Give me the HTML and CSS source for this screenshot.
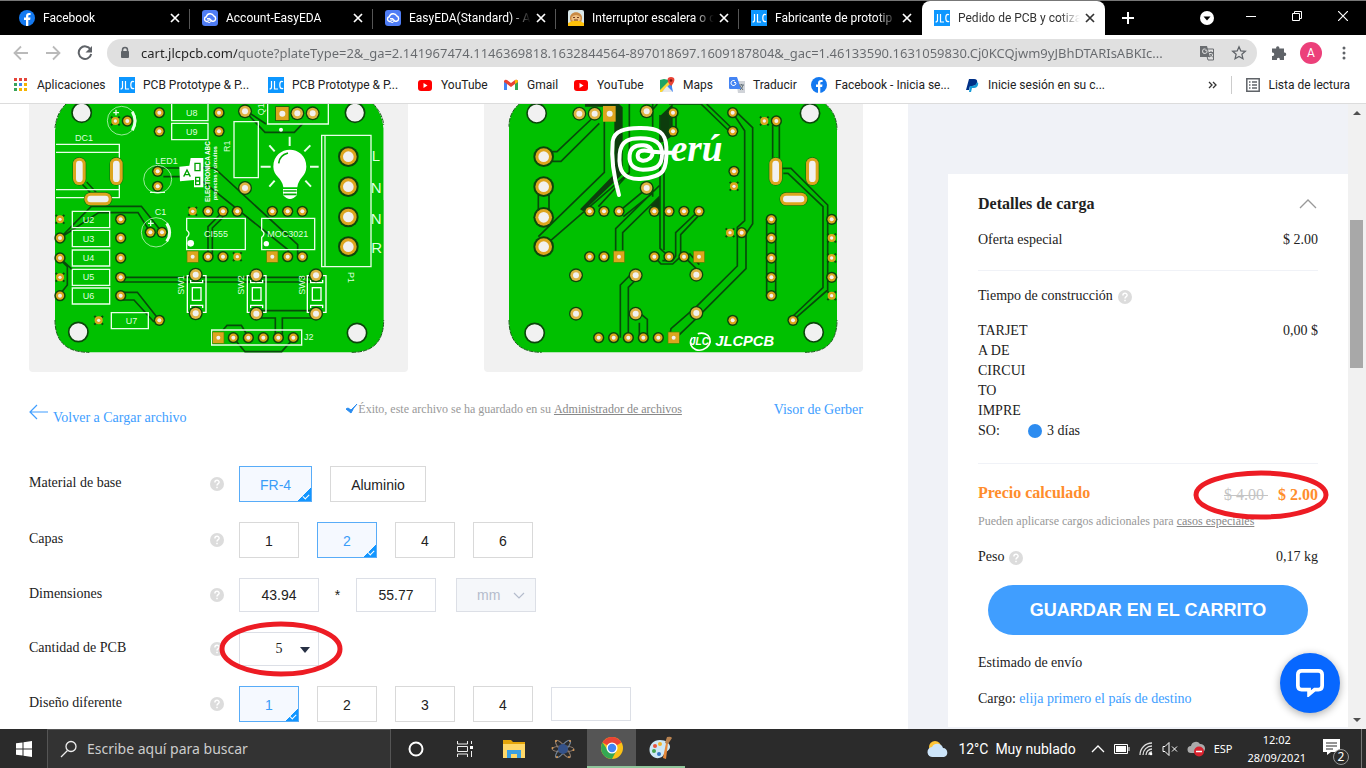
FILE: index.html
```html
<!DOCTYPE html>
<html lang="es">
<head>
<meta charset="utf-8">
<title>Pedido de PCB y cotización</title>
<link rel="stylesheet" href="styles.css">
</head>
<body>
<svg class="defs" aria-hidden="true">
  <symbol id="fb" viewBox="0 0 16 16"><circle cx="8" cy="8" r="8" fill="#1479f0"/><path d="M7 16V10H5V7.600h2V6c0-2 1.200-3.100 3-3.100.9 0 1.600.1 1.600.1v2h-1c-1 0-1.300.6-1.300 1.200v1.400h2.200L11.100 10H9.300v6z" fill="#fff"/></symbol>
  <symbol id="eda" viewBox="0 0 16 16"><rect width="16" height="16" rx="3" fill="#4f7df5"/><path d="M6 11.500H4.500a2.400 2.400 0 0 1-.2-4.700A4 4 0 0 1 11.800 6 2.700 2.700 0 0 1 11.500 11.200H10L7.500 8.700H5" fill="none" stroke="#fff" stroke-width="1.400"/><circle cx="7.200" cy="11.300" r="1.300" fill="#4f7df5" stroke="#fff"/></symbol>
  <symbol id="jlc" viewBox="0 0 16 16"><rect width="16" height="16" fill="#0d97ff"/><path d="M3.500 4v6q0 2-2 2M6.500 4v8h3.500M15 4.800Q14.500 4.400 13.800 4.400C12 4.400 11.800 6 11.800 8s.3 3.600 2 3.600q.8 0 1.300-.4" fill="none" stroke="#fff" stroke-width="1.200"/></symbol>
  <symbol id="face" viewBox="0 0 16 16"><rect width="16" height="16" rx="2" fill="#d9e6e8"/><path d="M2 9c-1-9 13-9 12 0l-1 4H3z" fill="#c98a45"/><path d="M3.500 7q4.500-4 9 0v3q-4 3-9 0z" fill="#efbf83"/><path d="M0 16v-3q8-5 16 0v3z" fill="#ffc10a"/><path d="M5 7.500h2M9 7.500h2M6 10h4" stroke="#713b1c"/></symbol>
  <symbol id="x" viewBox="0 0 10 10"><path d="M1 1l8 8M9 1L1 9" fill="none" stroke="currentColor" stroke-width="1.700"/></symbol>
  <symbol id="yt" viewBox="0 0 16 16"><rect x="1" y="3" width="14" height="11" rx="3" fill="#f00"/><path d="M6.500 6v5l4-2.500z" fill="#fff"/></symbol>
  <symbol id="help" viewBox="0 0 14 14"><circle cx="7" cy="7" r="7" fill="#dcdcdc"/><path d="M4.900 5.500C4.900 2.600 9.100 2.700 9.100 5.200 9.100 6.700 7 6.700 7 8.500M7 9.700v1.500" fill="none" stroke="#fff" stroke-width="1.500"/></symbol>
  <g id="pad"><circle r="17" fill="#0b470b"/><circle r="12.500" fill="#dca51e"/><circle r="6" fill="#f1f1ef"/></g>
  <g id="via"><path d="M-13-13l26 26M13-13l-26 26" stroke="#0b470b" stroke-width="6" stroke-dasharray="6 25"/><circle r="12" fill="#dca51e"/><circle r="5" fill="#f1f1ef"/></g>
  <g id="sq"><rect x="-17" y="-17" width="34" height="34" fill="#dca51e" stroke="#4f8500" stroke-width="2"/><circle r="6" fill="#f1f1ef"/></g>
  <g id="mid"><circle r="21" fill="#0b470b"/><circle r="17" fill="#dfb344"/><circle r="9" fill="#f1f1ef"/></g>
  <g id="big"><circle r="31" fill="#0b470b"/><circle r="25" fill="#dca51e"/><circle r="16" fill="#f1f1ef"/></g>
  <g id="hole"><circle r="29" fill="#f1f1f1" stroke="#0b470b" stroke-width="5"/></g>
  <g id="slot"><rect x="-21" y="-43" width="42" height="86" rx="21" fill="#0b7a0b"/><rect x="-19" y="-41" width="38" height="82" rx="19" fill="#dca51e"/><rect x="-10" y="-32" width="20" height="64" rx="10" fill="#f1f1f1"/></g>
  <g id="sw"><path d="M-18-55h-10V55h10M18-55h10V55h-10M-18-42v8h36v-8M-18 42v-8h36v8" fill="none" stroke="#fff" stroke-width="4"/><rect x="-13" y="-19" width="26" height="38" fill="none" stroke="#fff" stroke-width="4"/></g>
</svg>

<header class="browser">
  <div class="tabs">
    <div class="tab"><svg class="i16"><use href="#fb"/></svg><span>Facebook</span><button aria-label="Cerrar"><svg><use href="#x"/></svg></button></div>
    <div class="tab"><svg class="i16"><use href="#eda"/></svg><span>Account-EasyEDA</span><button aria-label="Cerrar"><svg><use href="#x"/></svg></button></div>
    <div class="tab"><svg class="i16"><use href="#eda"/></svg><span>EasyEDA(Standard) - A</span><button aria-label="Cerrar"><svg><use href="#x"/></svg></button></div>
    <div class="tab"><svg class="i16"><use href="#face"/></svg><span>Interruptor escalera o c</span><button aria-label="Cerrar"><svg><use href="#x"/></svg></button></div>
    <div class="tab last"><svg class="i16"><use href="#jlc"/></svg><span>Fabricante de prototip</span><button aria-label="Cerrar"><svg><use href="#x"/></svg></button></div>
    <div class="tab active"><svg class="i16"><use href="#jlc"/></svg><span>Pedido de PCB y cotiza</span><button aria-label="Cerrar"><svg><use href="#x"/></svg></button></div>
    <button class="newtab" aria-label="Nueva pestaña"><svg width="14" height="14"><path d="M7 1v12M1 7h12" stroke="#fff" stroke-width="2"/></svg></button>
    <div class="winbtns">
      <button aria-label="Buscar pestañas"><svg width="14" height="14"><circle cx="7" cy="7" r="7" fill="#fff"/><path d="M3.500 5.500h7L7 9.500z" fill="#000"/></svg></button>
      <button aria-label="Minimizar"><svg width="10" height="10"><path d="M0 5.500h10" stroke="#fff"/></svg></button>
      <button aria-label="Restaurar"><svg width="10" height="10"><path d="M2.500 2.500v-2h7v7h-2M.5 2.500h7v7h-7z" fill="none" stroke="#fff"/></svg></button>
      <button aria-label="Cerrar ventana"><svg width="10" height="10"><path d="M0 0l10 10M10 0L0 10" stroke="#fff" stroke-width="1.200"/></svg></button>
    </div>
  </div>
  <div class="toolbar">
    <button aria-label="Atrás"><svg width="16" height="16"><path d="M15 8H2M8 1.500L1.500 8 8 14.500" fill="none" stroke="#bababa" stroke-width="1.800"/></svg></button>
    <button aria-label="Adelante"><svg width="16" height="16"><path d="M1 8h13M8 1.500L14.500 8 8 14.500" fill="none" stroke="#bababa" stroke-width="1.800"/></svg></button>
    <button aria-label="Recargar"><svg width="16" height="16"><path d="M13.500 4.500A6.300 6.300 0 1 0 14.200 9" fill="none" stroke="#5f6368" stroke-width="2"/><path d="M15 1v6.500H8.500z" fill="#5f6368"/></svg></button>
    <div class="omni">
      <svg width="10" height="14"><path d="M2.500 6V4a2.500 2.500 0 0 1 5 0v2" fill="none" stroke="#5f6368" stroke-width="1.500"/><rect x="1" y="5" width="8" height="7" rx="1" fill="#5f6368"/></svg>
      <input type="text" aria-label="Dirección" value="cart.jlcpcb.com/quote?plateType=2&amp;_ga=2.141967474.1146369818.1632844564-897018697.1609187804&amp;_gac=1.46133590.1631059830.Cj0KCQjwm9yJBhDTARIsABKIc...">
      <button aria-label="Traducir"><svg width="16" height="16"><path d="M6 4h8.500v11H9z" fill="#e0e0e0" stroke="#6a6d70"/><path d="M1 1h7l3 11H1z" fill="#6a6d70"/><path d="M8 5.200H6M8 5.500A2.300 2.300 0 1 1 6.500 4" fill="none" stroke="#e0e0e0"/><path d="M10 7.500h4M12 6v1.500M13.500 8q-1 3-3 4M11 9l3 3.500" stroke="#6a6d70" fill="none"/></svg></button>
      <button aria-label="Favorito"><svg width="16" height="16"><path d="M8 1.800l1.800 4.100 4.500.4-3.400 3 1 4.400L8 11.400l-3.900 2.300 1-4.400-3.400-3 4.500-.4z" fill="none" stroke="#5f6368" stroke-width="1.300"/></svg></button>
    </div>
    <button aria-label="Extensiones"><svg width="16" height="16"><path d="M1 5V3.500h4.200C4.500.5 9 .5 8.300 3.500H13v4c3-.6 3 4 0 3.500V15H8.800c.6-3-3.400-3-2.800 0H1v-4c3 .5 3-4 0-3.500z" fill="#5f6368"/></svg></button>
    <button class="avatar">A</button>
    <button aria-label="Menú"><svg width="4" height="16"><g fill="#5f6368"><circle cx="2" cy="3" r="1.500"/><circle cx="2" cy="8" r="1.500"/><circle cx="2" cy="13" r="1.500"/></g></svg></button>
  </div>
  <nav class="bookmarks">
    <a href="#" class="bm1"><svg class="i16" viewBox="0 0 16 16"><path d="M1 1h3v3H1zM6 1h3v3H6zM11 1h3v3h-3z" fill="#e5453a"/><path d="M1 6h3v3H1zM1 11h3v3H1z" fill="#37a35a"/><path d="M6 6h3v3H6z" fill="#4285f4"/><path d="M11 6h3v3h-3zM6 11h3v3H6zM11 11h3v3h-3z" fill="#f5b400"/></svg>Aplicaciones</a>
    <a href="#" class="bm2"><svg class="i16"><use href="#jlc"/></svg>PCB Prototype &amp; P...</a>
    <a href="#" class="bm2"><svg class="i16"><use href="#jlc"/></svg>PCB Prototype &amp; P...</a>
    <a href="#" class="bm3"><svg class="i16"><use href="#yt"/></svg>YouTube</a>
    <a href="#" class="bm4"><svg class="i16" viewBox="0 0 16 16"><path d="M1 4v9h3V7l4 3 4-3v6h3V4q-1-2-3-1L8 6 4 3Q2 2 1 4z" fill="#ea4335"/><path d="M1 5v8h3V7z" fill="#4285f4"/><path d="M15 5v8h-3V7z" fill="#34a853"/><path d="M12 7V3q3-1 3 2z" fill="#fbbc04"/></svg>Gmail</a>
    <a href="#" class="bm3"><svg class="i16"><use href="#yt"/></svg>YouTube</a>
    <a href="#" class="bm4"><svg class="i16" viewBox="0 0 16 16"><path d="M1 3l4-1 5 1 3 4v8H1z" fill="#1fa463"/><path d="M1 15l11-10 2 10z" fill="#4285f4"/><path d="M1 13L11 3l2 2L3 15H1z" fill="#fdd835"/><path d="M8 9l6 6H3z" fill="#e8eaed"/><path d="M12 0c5 0 4 5 0 9-4-4-5-9 0-9z" fill="#ea4335"/><circle cx="12" cy="3.500" r="1.300" fill="#811411"/></svg>Maps</a>
    <a href="#" class="bm5"><svg class="i16" viewBox="0 0 16 16"><path d="M7 4h9v12H9z" fill="#d0d3d8"/><path d="M1 0h7l4 12H1q-1 0-1-1V1q0-1 1-1z" fill="#4484f3"/><path d="M7 5.500H5M7 6A2.500 2.500 0 1 1 6 4" fill="none" stroke="#fff"/><path d="M10 8h5M12.500 7v1M14 8q-1 4-3 5M11 9l3 4" fill="none" stroke="#64727a"/></svg>Traducir</a>
    <a href="#" class="bm6"><svg class="i16"><use href="#fb"/></svg>Facebook - Inicia se...</a>
    <a href="#" class="bm7"><svg class="i16" viewBox="0 0 16 16"><path d="M5 2h5q4 0 3 4-1 3-5 3H6l-1 4H2z" fill="#003087"/><path d="M6 9h2q4 0 5-4 2 1 1 3-1 3-4 3H8l-1 4H5z" fill="#169bd7"/></svg>Inicie sesión en su c...</a>
    <button class="more" aria-label="Más marcadores"><svg width="9" height="8"><path d="M1 1l3 3-3 3M5 1l3 3-3 3" fill="none" stroke="#333" stroke-width="1.300"/></svg></button>
    <a href="#" class="reading"><svg width="14" height="14"><path d="M.8.800h12.400v12.400H.8zM3 4h1.500M6 4h5M3 7h1.500M6 7h5M3 10h1.500M6 10h5" fill="none" stroke="#5f6368" stroke-width="1.500"/></svg>Lista de lectura</a>
  </nav>
</header>

<div class="page">
<main class="quote">
  <div class="boards">
    <figure>
      <svg viewBox="27 12 1137 804" class="pcb">
        <path d="M105 12V660q0 97 103 97H995q96 0 96-97V85Q1088 42 1060 12H138Q108 40 105 90z" fill="#00c000"/>
        <path d="M27 12h111Q108 40 105 90v200H27zM1060 12q28 30 31 73V300h60V12z" fill="#f1f1f1"/>
        <path d="M105 660q0 97 103 97M995 757q96 0 96-97M1060 12q28 30 31 63M138 12q-28 26-33 72" fill="none" stroke="#195f19" stroke-width="3" stroke-dasharray="14 3"/>
        <g class="tr">
          <path d="M180 246l50 51M200 246l44 48M120 414l94-95h150l62 78M120 414l116-76h118l37 59M120 474l36 34M120 478l22 22v55l-22 28M302 532h585M302 546h585M302 577h50l66 84M302 600h40l60 66M413 204h170l250 230v30M430 230h100l275 220v20M564 470V380l45-45M577 470V384l32-32M709 632h179M709 654h57v60M787 714v-60h101M609 690l12-14h43l21 35M640 713l35 42h110l38-42M675 34l60 63h88l25-26M690 40l48 32"/>
        </g>
        <g class="silk">
          <path d="M455 12v50h109V12M455 70h109v49H455zM108 133h190v160H108M108 157h190M108 269h190M157 334h112v49H157zM157 391h112v49H157zM157 450h112v48H157zM157 508h112v48H157zM157 564h112v48H157zM274 638h111v48H274zM500 355h176v94H500V412q14-10 0-22zM725 355h159v94H725V412q14-10 0-22zM575 690h270v45H575zM642 65h73v168h-73zM743 12v60h182V12M905 106h148v394H905zM915 106v394"/>
          <g stroke-width="2"><circle cx="305" cy="62" r="43"/><circle cx="413" cy="238" r="42"/><circle cx="408" cy="397" r="44"/></g>
          <path d="M337 35q16 28 0 56M440 370q18 27 0 54" stroke-width="9"/>
          <path d="M280 38h17M288 29v17M384 370h17M392 361v17M390 277h45"/>
          <g stroke-width="6"><path d="M809 110v28M748 136l16 18M871 136l-18 18M722 200h30M870 200h26M748 260l16-18M873 260l-17-18"/></g>
        </g>
        <g fill="#fff"><circle cx="783" cy="89" r="6"/><circle cx="512" cy="430" r="10"/><circle cx="739" cy="431" r="8"/>
          <path d="M760 200c0-68 99-68 99 0 0 30-24 32-27 62h-42c-3-30-30-32-30-62zM789 267h42v18q-21 24-42 0z"/><path d="M776 190q2-24 28-31M790 273h40M790 283h40" fill="none" stroke="#00b000" stroke-width="5"/>
          <path d="M478 200l30-3 4-23h38v88h-28v-22l-42 4z"/></g>
        <g fill="none" stroke="#00a000" stroke-width="4"><path d="M491 230l10-20 10 20M494 224h14M525 190h15v22h-15zM527 232h12v22h-12zM527 243h12"/></g>
        <g class="lbl">
          <text x="498" y="48">U8</text><text x="498" y="105">U9</text><text x="165" y="122">DC1</text><text x="406" y="191">LED1</text><text x="404" y="346">C1</text>
          <text x="188" y="368">U2</text><text x="188" y="426">U3</text><text x="188" y="484">U4</text><text x="188" y="541">U5</text><text x="188" y="597">U6</text><text x="317" y="671">U7</text>
          <text x="552" y="411">CI555</text><text x="742" y="411">MOC3021</text><text x="852" y="721">J2</text>
          <g class="net"><text x="1055" y="184">L</text><text x="1052" y="278">N</text><text x="1052" y="371">N</text><text x="1054" y="458">R</text></g>
          <text transform="translate(493 584) rotate(-90)">SW1</text><text transform="translate(673 584) rotate(-90)">SW2</text><text transform="translate(854 584) rotate(-90)">SW3</text><text transform="translate(631 156) rotate(-90)">R1</text><text transform="translate(731 46) rotate(-90)">Q1</text><text transform="translate(985 516) rotate(90)">P1</text>
          <text class="brand" transform="translate(571 306) rotate(-90)">ELECTRONICA ABC</text><text class="brand small" transform="translate(592 300) rotate(-90)">proyectos y circuitos</text>
        </g>
        <g transform="translate(20 20)">
          <use href="#via" x="266" y="43"/><use href="#pad" x="302" y="43"/><use href="#pad" x="398" y="18"/><use href="#pad" x="577" y="18"/><use href="#pad" x="398" y="74"/><use href="#pad" x="577" y="74"/>
          <use href="#pad" x="393" y="194"/><use href="#pad" x="393" y="239"/><use href="#pad" x="371" y="377"/><use href="#pad" x="406" y="377"/>
          <use href="#via" x="100" y="338"/><use href="#pad" x="100" y="394"/><use href="#pad" x="100" y="454"/><use href="#via" x="100" y="512"/><use href="#pad" x="100" y="567"/>
          <use href="#pad" x="282" y="338"/><use href="#pad" x="282" y="394"/><use href="#pad" x="282" y="454"/><use href="#pad" x="282" y="512"/><use href="#pad" x="282" y="567"/>
          <use href="#via" x="216" y="641"/><use href="#pad" x="398" y="641"/>
          <use href="#via" x="498" y="314"/><use href="#pad" x="544" y="314"/><use href="#pad" x="589" y="314"/><use href="#pad" x="632" y="314"/><use href="#sq" x="498" y="450"/><use href="#pad" x="544" y="450"/><use href="#pad" x="589" y="450"/><use href="#via" x="632" y="450"/>
          <use href="#pad" x="737" y="314"/><use href="#pad" x="783" y="314"/><use href="#pad" x="827" y="314"/><use href="#sq" x="737" y="450"/><use href="#pad" x="783" y="450"/><use href="#pad" x="827" y="450"/>
          <use href="#sq" x="575" y="693"/><use href="#pad" x="620" y="693"/><use href="#pad" x="665" y="693"/><use href="#pad" x="710" y="693"/><use href="#pad" x="755" y="693"/><use href="#pad" x="800" y="693"/>
        </g>
        <use href="#sw" x="530" y="582"/><use href="#sw" x="710" y="582"/><use href="#sw" x="890" y="582"/>
        <g transform="translate(24 24)">
          <use href="#mid" x="503" y="500"/><use href="#mid" x="503" y="616"/><use href="#mid" x="685" y="502"/><use href="#mid" x="685" y="617"/><use href="#mid" x="864" y="502"/><use href="#mid" x="864" y="617"/><use href="#mid" x="651" y="10"/><use href="#mid" x="651" y="240"/><use href="#mid" x="808" y="16"/><use href="#mid" x="854" y="16"/>
        </g>
        <rect x="767" y="20" width="40" height="42" fill="#dca51e" stroke="#0b470b" stroke-width="2"/><circle cx="787" cy="41" r="9" fill="#f1f1ef"/>
        <use href="#big" x="985" y="170"/><use href="#big" x="985" y="260"/><use href="#big" x="985" y="351"/><use href="#big" x="985" y="440"/>
        <use href="#hole" x="185" y="38"/><use href="#hole" x="175" y="696"/><use href="#hole" x="1005" y="38"/><use href="#hole" x="1011" y="699"/>
        <use href="#slot" x="178" y="214"/><use href="#slot" x="289" y="214"/><use href="#slot" transform="translate(234 297) rotate(90)"/>
      </svg>
    </figure>
    <figure>
      <svg viewBox="12 12 1137 804" class="pcb">
        <path d="M118 12Q87 38 87 80V660q0 97 98 97H975q96 0 96-97V88Q1070 40 1036 12z" fill="#00c000"/>
        <path d="M87 660q0 97 98 97M975 757q96 0 96-97M1036 12q34 28 35 76M118 12q-31 26-31 68" fill="none" stroke="#195f19" stroke-width="3" stroke-dasharray="14 3"/>
        <path d="M315 12h102l11 10v200L310 334l-10-6L403 222V20H315zM540 48l38-36v95l-30 20h-10zM510 317l30-30v45z" fill="#0d3d0d"/>
        <g class="tr">
          <path d="M191 155h40L344 48M191 184h52L358 70M373 65v152L175 410M448 12v207L355 320M191 440L448 217M175 284v48M207 284v48M417 334l85-70M430 350l87-70M407 460v-74L540 255M428 450v-52L540 288M540 45v400l27 25M552 130v320M518 12v70M518 260v30M570 45v50M588 45v50M421 713V555l28-28M445 713V562l22-22M478 713v-45M502 713v-55l-30-25M532 12l-20 25M547 482h30l10-14v-70l65-62M523 470l20 22h35l24-22v-66l52-55M567 12h96l87 84M680 12l78 75M758 38l36 54v270l-22 20v116L649 620l-76 66-5 27M758 25l60 58v288l-20 30v105L649 655l-60 58M612 470l36 35M628 460l30 34M878 75v100M898 75v100M905 205h28l110 110v255L939 661M910 220h14l105 100v243L939 648M860 358v230M887 358v230"/>
        </g>
        <g transform="translate(20 20)">
          <use href="#pad" x="559" y="18"/><use href="#pad" x="559" y="74"/>
          <use href="#pad" x="309" y="314"/><use href="#pad" x="352" y="314"/><use href="#pad" x="397" y="314"/><use href="#pad" x="503" y="314"/><use href="#pad" x="547" y="314"/><use href="#pad" x="592" y="314"/><use href="#pad" x="637" y="314"/>
          <use href="#pad" x="309" y="450"/><use href="#pad" x="352" y="450"/><use href="#sq" x="397" y="450"/><use href="#pad" x="503" y="450"/><use href="#pad" x="547" y="450"/><use href="#pad" x="592" y="450"/><use href="#sq" x="637" y="450"/>
          <use href="#pad" x="336" y="693"/><use href="#pad" x="381" y="693"/><use href="#pad" x="425" y="693"/><use href="#pad" x="470" y="693"/><use href="#pad" x="515" y="693"/><use href="#sq" x="561" y="693"/>
          <use href="#pad" x="738" y="18"/><use href="#pad" x="738" y="74"/><use href="#via" x="833" y="43"/><use href="#pad" x="869" y="43"/><use href="#pad" x="742" y="194"/><use href="#via" x="742" y="239"/><use href="#via" x="730" y="378"/><use href="#pad" x="765" y="378"/>
          <use href="#pad" x="854" y="338"/><use href="#pad" x="854" y="394"/><use href="#pad" x="854" y="454"/><use href="#pad" x="854" y="512"/><use href="#pad" x="854" y="567"/>
          <use href="#pad" x="1035" y="338"/><use href="#via" x="1035" y="394"/><use href="#via" x="1035" y="454"/><use href="#pad" x="1035" y="512"/><use href="#via" x="1035" y="567"/><use href="#pad" x="738" y="641"/><use href="#pad" x="919" y="641"/>
        </g>
        <g transform="translate(24 24)">
          <use href="#mid" x="264" y="502"/><use href="#mid" x="443" y="502"/><use href="#mid" x="264" y="617"/><use href="#mid" x="443" y="617"/><use href="#mid" x="625" y="500"/><use href="#mid" x="625" y="615"/><use href="#mid" x="476" y="10"/><use href="#mid" x="476" y="240"/><use href="#mid" x="274" y="17"/><use href="#mid" x="320" y="17"/>
        </g>
        <rect x="369" y="18" width="38" height="47" fill="#dca51e"/><circle cx="389" cy="41" r="9" fill="#f1f1ef"/>
        <use href="#big" x="191" y="170"/><use href="#big" x="191" y="260"/><use href="#big" x="191" y="352"/><use href="#big" x="191" y="440"/>
        <use href="#hole" x="170" y="40"/><use href="#hole" x="164" y="699"/><use href="#hole" x="990" y="40"/><use href="#hole" x="1001" y="697"/>
        <use href="#slot" x="887" y="214"/><use href="#slot" x="997" y="214"/><use href="#slot" transform="translate(941 297) rotate(90)"/>
        <path d="M417 285C400 225 393 175 398 125c4-35 40-40 80-41 60-1 79 14 81 57 3 70-5 90-78 96-52 2-66-26-62-74 3-42 30-48 62-48 43 0 65 12 65 48 0 38-20 46-57 46-28 0-43-15-40-44 3-24 20-31 42-29 24 2 33 24 20 38-18 14-38 8-38-7 0-12 12-18 28-15 35 7 60 5 80 6" fill="none" stroke="#fff" stroke-width="12" stroke-linecap="round"/>
        <text x="572" y="184" class="peru">erú</text>
        <ellipse cx="661" cy="725" rx="30" ry="25" fill="none" stroke="#fff" stroke-width="5" transform="rotate(-20 661 725)" stroke-dasharray="110 20"/>
        <text x="630" y="735" class="jlcs">JLC</text><text x="706" y="738" class="jlcb">JLCPCB</text>
      </svg>
    </figure>
  </div>
  <div class="links">
    <a href="#" class="back"><svg width="20" height="16"><path d="M19 8H1M8 1L1 8l7 7" fill="none" stroke="#409eff" stroke-width="1.200"/></svg>Volver a Cargar archivo</a>
    <p><svg width="12" height="10"><path d="M0 5l2-1 3 2 6-6q-4 4-6 9z" fill="#2a8cf0" stroke="#2a8cf0"/></svg>Éxito, este archivo se ha guardado en su <a href="#">Administrador de archivos</a></p>
    <a href="#" class="viewer">Visor de Gerber</a>
  </div>
  <form class="options">
    <div class="row"><span class="label">Material de base</span><svg class="help"><use href="#help"/></svg>
      <div class="ctrl"><button type="button" class="opt on">FR-4</button><button type="button" class="opt">Aluminio</button></div></div>
    <div class="row"><span class="label">Capas</span><svg class="help"><use href="#help"/></svg>
      <div class="ctrl"><button type="button" class="opt">1</button><button type="button" class="opt on">2</button><button type="button" class="opt">4</button><button type="button" class="opt">6</button></div></div>
    <div class="row"><label class="label" for="dimx">Dimensiones</label><svg class="help"><use href="#help"/></svg>
      <div class="ctrl dims"><input id="dimx" type="text" value="43.94"><span class="times">*</span><input type="text" aria-label="Alto" value="55.77"><div class="unit"><select aria-label="Unidad" disabled><option>mm</option></select><svg width="12" height="8"><path d="M1 1l5 5 5-5" fill="none" stroke="#b4bccc" stroke-width="1.200"/></svg></div></div></div>
    <div class="row"><label class="label" for="qty">Cantidad de PCB</label><svg class="help"><use href="#help"/></svg>
      <div class="ctrl"><div class="qty"><select id="qty"><option>5</option></select><svg class="caret" width="10" height="6"><path d="M0 0h10L5 6z" fill="#273044"/></svg><svg class="ring" viewBox="0 0 124 56"><ellipse cx="62" cy="28" rx="59" ry="25"/></svg></div></div></div>
    <div class="row"><span class="label">Diseño diferente</span><svg class="help"><use href="#help"/></svg>
      <div class="ctrl"><button type="button" class="opt on">1</button><button type="button" class="opt">2</button><button type="button" class="opt">3</button><button type="button" class="opt">4</button><input type="text" aria-label="Otra cantidad"></div></div>
  </form>
</main>
<aside class="side">
  <section class="card">
    <header class="between head"><h2>Detalles de carga</h2><svg width="18" height="10"><path d="M1 9l8-8 8 8" fill="none" stroke="#999" stroke-width="1.300"/></svg></header>
    <div class="between offer"><span>Oferta especial</span><span>$ 2.00</span></div>
    <div class="build">
      <div class="with-help">Tiempo de construcción <svg class="help"><use href="#help"/></svg></div>
      <div class="pcbtime"><span class="narrow">TARJET<br>A DE<br>CIRCUI<br>TO<br>IMPRE<br>SO:</span><label class="days"><input type="radio" checked>3 días</label><span class="cost">0,00 $</span></div>
    </div>
    <div class="between price"><strong>Precio calculado</strong><div class="amount"><s>$ 4.00&nbsp;</s><strong>$ 2.00</strong><svg class="ring" viewBox="0 0 136 50"><ellipse cx="68" cy="25" rx="65" ry="22"/></svg></div></div>
    <p class="note">Pueden aplicarse cargos adicionales para <a href="#">casos especiales</a></p>
    <div class="between weight"><div class="with-help">Peso <svg class="help"><use href="#help"/></svg></div><span>0,17 kg</span></div>
    <button class="save">GUARDAR EN EL CARRITO</button>
    <p class="ship">Estimado de envío</p>
    <p class="ship">Cargo: <a href="#">elija primero el país de destino</a></p>
  </section>
  <button class="chat" aria-label="Chat"><svg width="28" height="28" viewBox="0 0 30 30"><path d="M6 2h18q4 0 4 4v12q0 4-4 4h-4l-6 5v-5H6q-4 0-4-4V6q0-4 4-4z" fill="none" stroke="#fff" stroke-width="4"/></svg></button>
</aside>
<div class="scroll"><svg width="10" height="6"><path d="M1 5l4-4 4 4z" fill="#505050"/></svg><div class="track"><div class="thumb"></div></div><svg width="10" height="6"><path d="M1 1l4 4 4-4z" fill="#505050"/></svg></div>
</div>

<footer class="taskbar">
  <button class="start" aria-label="Inicio"><svg width="16" height="16"><path d="M0 2.300l6.500-.9v6.100H0zM7.500 1.200L16 0v7.500H7.500zM0 8.500h6.500v6.100L0 13.700zM7.500 8.500H16V16l-8.500-1.200z" fill="#fff"/></svg></button>
  <label class="search"><svg width="18" height="18"><circle cx="11" cy="6.500" r="5" fill="none" stroke="#eee" stroke-width="1.300"/><path d="M7.500 10.500L1 17" stroke="#eee" stroke-width="1.300"/></svg><input type="text" placeholder="Escribe aquí para buscar"></label>
  <div class="apps">
    <button aria-label="Cortana"><svg width="18" height="18"><circle cx="9" cy="9" r="6.500" fill="none" stroke="#fff" stroke-width="2"/></svg></button>
    <button aria-label="Vista de tareas"><svg width="18" height="18"><path d="M1.500 1v3h10V1M1.500 17v-3h10v3M1.500 6.500h10v5h-10zM15.500 1v3M15.500 11v6" fill="none" stroke="#eee"/><path d="M14 6h3v3h-3z" fill="#fff"/></svg></button>
    <button aria-label="Explorador"><svg width="24" height="20"><path d="M1 1h8l2 2h12v16H1z" fill="#e5a50a"/><path d="M1 5h22v14H1z" fill="#ffd869"/><path d="M5 19v-8h14v8h-4v-4H9v4z" fill="#3b9fe3"/></svg></button>
    <button aria-label="Electrónica"><svg width="24" height="20"><g fill="none" stroke="#8d7a6c"><ellipse cx="12" cy="10" rx="11" ry="3"/><ellipse cx="12" cy="10" rx="11" ry="3" transform="rotate(50 12 10)"/><ellipse cx="12" cy="10" rx="11" ry="3" transform="rotate(-50 12 10)" stroke="#73859a"/></g><circle cx="12" cy="10" r="5" fill="#34528a"/><g fill="#d99a55"><circle cx="5" cy="2" r="1"/><circle cx="19" cy="2" r="1"/><circle cx="1.500" cy="9" r="1"/><circle cx="22.500" cy="11" r="1"/><circle cx="6" cy="18" r="1"/><circle cx="18" cy="18" r="1"/></g></svg></button>
    <button class="current" aria-label="Chrome"><svg width="22" height="22" viewBox="-11 -11 22 22"><circle r="11" fill="#fbc116"/><path d="M0 0L-9.500-5.500A11 11 0 0 1 9.500-5.500z" fill="#ea4335"/><path d="M-9.500-5.500A11 11 0 0 0 0 11L4.500 2.500-4 2.500z" fill="#34a853"/><circle r="5.500" fill="#fff"/><circle r="4.200" fill="#4285f4"/></svg></button>
    <button class="open" aria-label="Paint"><svg width="24" height="24"><path d="M11 4C3 4-1 11 1 17q3 6 9 5c5-1 4-4 7-6 8-4 3-12-6-12z" fill="#cde8f7"/><circle cx="6" cy="10" r="2" fill="#e8543e"/><circle cx="11" cy="8" r="2" fill="#f0b52b"/><circle cx="5" cy="15" r="2" fill="#46a653"/><circle cx="10" cy="18" r="2" fill="#3276c8"/><path d="M19 7l-2 16-3-1 3-15z" fill="#e6893b"/><path d="M18 1q4-1 5 1l-4 6-3-1z" fill="#b88250"/></svg></button>
  </div>
  <div class="tray">
    <svg width="22" height="18"><circle cx="8" cy="7" r="6" fill="#ffc638"/><path d="M6 17a5 5 0 0 1-1-10 6 6 0 0 1 11 1 4.600 4.600 0 0 1 1 9z" fill="#cde5fa"/></svg>
    <span class="weather">12°C&nbsp; Muy nublado</span>
    <svg width="14" height="8"><path d="M1 7l6-6 6 6" fill="none" stroke="#fff" stroke-width="1.300"/></svg>
    <svg width="16" height="10"><path d="M.5.500h13v9H.5zM15 3v4" fill="none" stroke="#fff"/><path d="M2 2h10v6H2z" fill="#fff"/></svg>
    <svg width="14" height="14"><path d="M1 13A12 12 0 0 1 13 1M4 13a9 9 0 0 1 9-9M7 13a6 6 0 0 1 6-6M10 13a3 3 0 0 1 3-3" fill="none" stroke="#ddd" stroke-width="1.300"/><circle cx="12" cy="12" r="1.300" fill="#fff"/></svg>
    <svg width="16" height="14"><path d="M1 4.500h2l4-4v13l-4-4H1zM10 4.500l5 5M15 4.500l-5 5" fill="none" stroke="#fff"/></svg>
    <svg width="18" height="16"><path d="M4 12a3.500 3.500 0 0 1 0-7 5 5 0 0 1 9-2 4 4 0 0 1 1 9z" fill="#aaa"/><circle cx="12" cy="10.500" r="5" fill="#d8232f"/><path d="M9 10.500h6" stroke="#fff" stroke-width="1.500"/></svg>
    <span class="lang">ESP</span>
    <div class="clock">12:02<br>28/09/2021</div>
    <button class="notif" aria-label="2 notificaciones"><svg width="17" height="16"><path d="M0 0h17v13H8l-4 3v-3H0z" fill="#fff"/><path d="M3 4h11M3 7h11M3 10h7" stroke="#2b2b2b"/></svg><span>2</span></button>
  </div>
</footer>
</body>
</html>
```
FILE: styles.css
```css
* { box-sizing: border-box; }
body { margin: 0; height: 100vh; overflow: hidden; display: flex; flex-direction: column; font: 14px/20px "Liberation Serif", serif; color: #222; background: #fff; }
button { border: 0; padding: 0; background: none; font: inherit; color: inherit; display: flex; align-items: center; justify-content: center; }
p, h2, figure { margin: 0; }
svg { display: block; flex: none; }
.defs { position: absolute; width: 0; height: 0; }
.i16 { width: 16px; height: 16px; }

.browser { flex: none; font: 12px/16px Roboto, sans-serif; border-bottom: 1px solid #dcdcdc; }
.tabs { display: flex; align-items: stretch; height: 35px; padding-left: 7px; background: #000; border-top: 1px solid #777; color: #fff; }
.tab { flex: 0 1 183px; min-width: 0; display: flex; align-items: center; padding: 0 10px 0 12px; position: relative; }
.tab span { flex: 1; min-width: 0; overflow: hidden; white-space: nowrap; margin: 0 0 0 8px; -webkit-mask-image: linear-gradient(to right, #000 80%, transparent 96%); mask-image: linear-gradient(to right, #000 80%, transparent 96%); }
.tab svg { flex: none; }
.tab button svg { width: 10px; height: 10px; }
.tab::after { content: ""; position: absolute; right: 0; top: 8px; bottom: 6px; border-right: 1px solid #555; }
.tab.last::after, .tab.active::after { display: none; }
.tab.active { background: #fff; color: #333; border-radius: 8px 8px 0 0; }
.newtab { width: 46px; }
.winbtns { margin-left: auto; display: flex; }
.winbtns button { width: 46px; padding-bottom: 4px; }
.winbtns button:first-child { width: 42px; padding: 0; }
.toolbar { display: flex; align-items: center; height: 36px; padding: 0 20px 0 13px; gap: 16px; }
.omni { flex: 1; min-width: 0; height: 28px; border-radius: 14px; background: #e0e0e0; display: flex; align-items: center; padding: 0 10px 0 13px; margin: 0 -2px; }
.omni input { flex: 1; min-width: 0; border: 0; padding: 0; margin: 0 8px 0 11px; font: 13px/20px "Noto Sans", sans-serif; color: transparent; background: linear-gradient(to right, #222 96px, #66696d 96px); -webkit-background-clip: text; background-clip: text; }
.omni button + button { margin-left: 16px; }
.avatar { width: 22px; height: 22px; border-radius: 11px; background: #ec407a; color: #fff; margin: 0 4px 0 -3px; }
.bookmarks { display: flex; align-items: center; height: 32px; padding: 0 16px 4px 13px; white-space: nowrap; }
.bookmarks a { color: #222; text-decoration: none; display: flex; align-items: center; gap: 8px; flex: none; }
.bm1 { width: 106px; } .bm2 { width: 149px; } .bm3 { width: 86px; } .bm4 { width: 70px; } .bm5 { width: 82px; } .bm6 { width: 153px; } .bm7 { width: 150px; }
.bookmarks .more { margin-left: auto; padding: 0 14px; }
.bookmarks .reading { border-left: 1px solid #ccc; padding-left: 14px; line-height: 18px; }

.page { flex: 1; min-height: 0; display: flex; overflow: hidden; background: #f0f2f7; }
.quote { flex: 1; min-width: 0; background: #fff; padding: 0 45px 0 29px; }
.boards { display: grid; grid-template-columns: 1fr 1fr; gap: 76px; }
.boards figure { background: #f1f1f1; border-radius: 0 0 4px 4px; overflow: hidden; }
.pcb { width: 100%; height: auto; }
.tr path { fill: none; stroke: #074a0a; stroke-width: 5; }
.silk { fill: none; stroke: #e9ffe9; stroke-width: 4; }
.lbl { fill: #dfffdf; font: 27px "Liberation Sans", sans-serif; }
.net { font-size: 45px; }
.brand { font-size: 19px; font-weight: 700; fill: #fff; }
.small { font-size: 16px; }
.peru { font: italic 700 112px "Liberation Serif", serif; fill: #fff; }
.jlcs { font: italic 700 30px "Liberation Sans", sans-serif; fill: #fff; }
.jlcb { font: italic 700 44px "Liberation Sans", sans-serif; fill: #fff; }

.links { display: flex; justify-content: space-between; align-items: flex-start; padding-top: 28px; height: 94px; }
.links a, .ship a { color: #409eff; text-decoration: none; }
.links .back { display: flex; align-items: flex-start; gap: 4px; line-height: 36px; }
.back svg { margin-top: 4px; }
.links p { display: flex; align-items: center; font-size: 12px; line-height: 18px; color: #999; white-space: pre; margin: 0 0 0 68px; }
.links p a, .note a { color: #888; text-decoration: underline; }
.options { display: flex; flex-direction: column; gap: 20px; }
.row { display: flex; align-items: center; }
.label { width: 181px; padding-bottom: 2px; }
.help { width: 14px; height: 14px; }
.row .help { margin-right: 15px; }
.ctrl { display: flex; align-items: center; gap: 18px; font: 14px/20px "Liberation Sans", sans-serif; }
.opt { height: 36px; min-width: 60px; padding: 2px 20px 0; border: 1px solid #d9d9d9; background: #fff; position: relative; }
.opt.on { border-color: #58acf8; background: #f5f9ff; color: #3a9df8; }
.opt.on::after { content: ""; position: absolute; right: 0; bottom: 0; width: 13px; height: 13px; background: linear-gradient(135deg, transparent 50%, #1296ff 50%); }
.opt.on::before { content: ""; position: absolute; z-index: 1; right: 2px; bottom: 3px; width: 5px; height: 3px; border: solid #fff; border-width: 0 0 1px 1px; transform: rotate(-45deg); }
.ctrl input, .ctrl select { width: 80px; height: 34px; border: 1px solid #dcdfe6; background: #fff; color: #222; font: inherit; text-align: center; padding: 0; appearance: none; }
.dims { gap: 0; }
.times { width: 37px; text-align: center; }
.unit { position: relative; margin-left: 20px; }
.unit select { background: #f5f7fa; color: #b4bccc; opacity: 1; padding: 0 28px 0 20px; text-align: left; }
.unit svg { position: absolute; right: 11px; top: 14px; }
.qty { position: relative; }
.qty select { font-family: "Liberation Serif", serif; text-align-last: center; }
.caret { position: absolute; right: 9px; top: 15px; }
.ring { position: absolute; pointer-events: none; }
.ring ellipse { fill: none; stroke: #ed1c24; stroke-width: 5; }
.qty .ring { width: 124px; left: -20px; top: -11px; }

.side { width: 440px; padding: 70px 0 2px 40px; position: relative; }
.card { background: #fff; height: 100%; padding: 20px 30px 0; }
.between { display: flex; justify-content: space-between; align-items: center; }
.head h2 { font-size: 16px; line-height: 20px; }
.head svg { margin-right: 1px; }
.offer { padding: 16px 0 20px; border-bottom: 1px solid #f0f2f7; }
.build { padding: 15px 0 22px; border-bottom: 1px solid #f0f2f7; }
.with-help { display: flex; align-items: center; gap: 5px; }
.with-help .help { margin-top: 2px; }
.pcbtime { display: flex; padding-top: 15px; }
.narrow { width: 50px; white-space: nowrap; }
.days { display: flex; align-items: center; gap: 5px; align-self: flex-end; }
.days input { appearance: none; width: 14px; height: 14px; margin: 0; border-radius: 7px; background: #2d8cf0; }
.cost { margin-left: auto; }
.price { padding-top: 18px; font-size: 16px; line-height: 22px; color: #ff8d2c; align-items: flex-start; }
.amount { position: relative; display: flex; padding-top: 2px; }
.amount s { color: #c4c4c4; margin-right: 10px; }
.amount .ring { width: 136px; right: -11px; top: -12px; }
.note { font-size: 12px; line-height: 16px; color: #999; padding-top: 7px; }
.weight { padding: 18px 0; }
.save { width: 320px; max-width: 100%; height: 50px; margin: 0 auto 18px; border-radius: 25px; background: #409eff; color: #fff; font: 700 18px/20px "Liberation Sans", sans-serif; }
.ship { padding-bottom: 16px; }
.chat { position: absolute; right: 8px; bottom: 16px; width: 60px; height: 60px; border-radius: 30px; background: #0767ff; box-shadow: 0 2px 8px #0005; }
.scroll { width: 18px; background: #f1f1f1; display: flex; flex-direction: column; align-items: center; justify-content: space-between; padding: 6px 0; }
.track { flex: 1; align-self: stretch; padding: 104px 3px 0 2px; }
.thumb { height: 148px; background: #a8a8a8; }

.taskbar { flex: none; height: 39px; display: flex; background: #2b2b2b; color: #fff; font: 12px/18px "Noto Sans", sans-serif; }
.start { width: 47px; }
.search { width: 344px; display: flex; align-items: center; gap: 9px; padding-left: 12px; background: #333; border: 1px solid #555; border-bottom: 0; }
.search input { flex: 1; min-width: 0; border: 0; padding: 0; background: none; font: 14px/20px "Noto Sans", sans-serif; }
.search input::placeholder { color: #ccc; }
.apps { display: flex; }
.apps button { width: 49px; }
.apps .current { background: #555; border-bottom: 2px solid #8fc59b; }
.apps .open { border-bottom: 2px solid #8fc59b; }
.tray { margin-left: auto; display: flex; align-items: center; gap: 9px; border-right: 1px solid #777; margin-right: 4px; padding-right: 12px; }
.weather { font: 14px/18px Roboto, sans-serif; margin-right: 6px; }
.lang { font-size: 11px; }
.clock { font-size: 11px; text-align: center; margin: 0 8px 0 6px; }
.notif { position: relative; width: 26px; height: 26px; align-items: flex-start; justify-content: flex-start; padding-top: 3px; }
.notif span { position: absolute; right: 0; bottom: -3px; width: 16px; height: 16px; line-height: 14px; border: 1px solid #999; border-radius: 8px; background: #2b2b2b; }
```
